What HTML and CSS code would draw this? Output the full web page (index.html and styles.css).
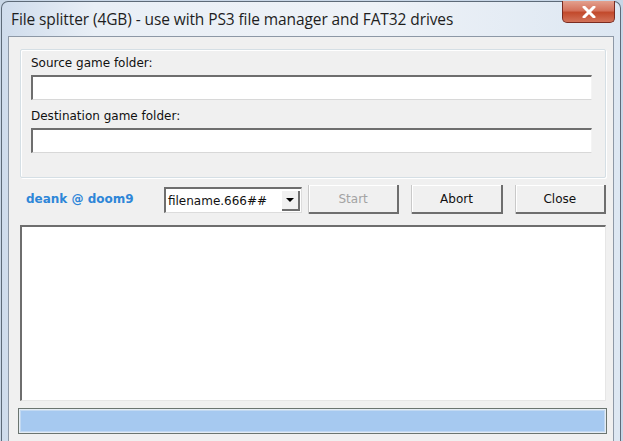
FILE: index.html
```html
<!DOCTYPE html>
<html lang="en">

<head>
    <meta charset="UTF-8">
    <title>File splitter (4GB)</title>
    <link rel="stylesheet" href="styles.css">
</head>

<body>
    <div class="window">
        <div class="titlebar">
            <span class="title">File splitter (4GB) - use with PS3 file manager and FAT32 drives</span>
            <button class="close-btn">
                <svg width="14" height="12" viewBox="0 0 14 12">
                    <path d="M2 1 L12 11 M12 1 L2 11" stroke="#fff" stroke-width="3" stroke-linecap="round" />
                </svg>
            </button>
        </div>

        <div class="client">
            <div class="group">
                <label class="field-label">Source game folder:</label>
                <div class="edit"></div>
                <label class="field-label">Destination game folder:</label>
                <div class="edit"></div>
            </div>

            <div class="toolbar">
                <span class="credit">deank @ doom9</span>
                <div class="combo">
                    <span class="combo-text">filename.666##</span>
                    <span class="combo-arrow">
                        <svg width="8" height="4" viewBox="0 0 8 4">
                            <path d="M0 0 H8 L4 4 Z" fill="#000" />
                        </svg>
                    </span>
                </div>
                <button class="btn disabled">Start</button>
                <button class="btn">Abort</button>
                <button class="btn">Close</button>
            </div>

            <div class="log"></div>

            <div class="progress">
                <div class="progress-fill"></div>
            </div>
        </div>
    </div>
</body>

</html>
```

FILE: styles.css
```css
* {
    box-sizing: border-box;
}

body {
    margin: 0;
    width: 623px;
    height: 441px;
    overflow: hidden;
    background: #c8d6e6;
    font-family: Tahoma, "DejaVu Sans", sans-serif;
}

.window {
    width: 620px;
    height: 441px;
    margin-left: 1px;
    margin-top: 1px;
    border: 1px solid #5d6a78;
    border-bottom: none;
    border-radius: 7px 7px 0 0;
    background: linear-gradient(90deg, #cfdcec 0%, #e9eff6 15%, #eef2f7 60%, #dde7f2 100%);
    display: flex;
    flex-direction: column;
}

.titlebar {
    height: 34px;
    display: flex;
    align-items: flex-start;
    justify-content: space-between;
    padding-left: 9px;
    flex-shrink: 0;
}

.title {
    margin-top: 6px;
    font-family: "Open Sans", "Noto Sans", sans-serif;
    font-size: 15.5px;
    color: #1e1e1e;
    letter-spacing: -0.1px;
}

.close-btn {
    width: 53px;
    height: 22px;
    margin-right: 5px;
    margin-top: -1px;
    border: 1px solid #7a2b20;
    border-top: none;
    border-radius: 0 0 5px 5px;
    background: linear-gradient(180deg, #e3a08e 0%, #d4725c 45%, #c24a2c 55%, #d27259 100%);
    display: flex;
    align-items: center;
    justify-content: center;
    padding: 0;
}

.client {
    flex: 1;
    margin-left: 6px;
    margin-right: 6px;
    border: 1px solid #8d98a6;
    border-bottom: none;
    background: #f0f0f0;
    padding: 12px 7px 0 11px;
    display: flex;
    flex-direction: column;
}

.group {
    height: 129px;
    border: 1px solid #d5dfe5;
    box-shadow: inset 1px 1px 0 #fff, 1px 1px 0 #fff;
    border-radius: 2px;
    padding: 5px 13px 0 10px;
    display: flex;
    flex-direction: column;
}

.field-label {
    font-size: 12px;
    color: #111;
    height: 20px;
    line-height: 16px;
}

.edit {
    height: 25px;
    background: #fff;
    border-top: 2px solid #6e6e6e;
    border-left: 2px solid #6e6e6e;
    border-right: 1px solid #f4f4f4;
    border-bottom: 1px solid #d8d8d8;
    margin-bottom: 8px;
}

.toolbar {
    height: 46px;
    display: flex;
    align-items: flex-start;
    padding-top: 7px;
}

.credit {
    width: 145px;
    padding-left: 6px;
    margin-top: 7px;
    font-size: 12px;
    font-weight: bold;
    color: #2e86d8;
}

.combo {
    width: 139px;
    height: 26px;
    margin-top: 2px;
    background: #fff;
    border-top: 2px solid #6e6e6e;
    border-left: 2px solid #6e6e6e;
    border-right: 1px solid #dcdcdc;
    border-bottom: 1px solid #dcdcdc;
    display: flex;
    align-items: center;
    justify-content: space-between;
    padding-left: 2px;
    padding-right: 1px;
}

.combo-text {
    font-size: 12px;
    color: #111;
}

.combo-arrow {
    width: 18px;
    height: 20px;
    background: #f0f0f0;
    border-right: 2px solid #6e6e6e;
    border-bottom: 2px solid #6e6e6e;
    display: flex;
    align-items: center;
    justify-content: center;
}

.btn {
    width: 91px;
    height: 29px;
    margin-left: 13px;
    background: #f0f0f0;
    border: none;
    border-right: 2px solid #6e6e6e;
    border-bottom: 2px solid #6e6e6e;
    box-shadow: inset 1px 1px 0 #fff, -1px 0 0 #c9c9c9;
    font-family: Tahoma, "DejaVu Sans", sans-serif;
    font-size: 12px;
    color: #111;
    padding: 0;
}

.btn.disabled {
    margin-left: 7px;
    color: #a3a3a3;
}

.log {
    height: 176px;
    margin-top: 1px;
    background: #fff;
    border-top: 2px solid #6e6e6e;
    border-left: 2px solid #6e6e6e;
    border-right: 1px solid #e6e6e6;
    border-bottom: 1px solid #e6e6e6;
}

.progress {
    height: 26px;
    margin-top: 7px;
    margin-left: -2px;
    margin-right: -1px;
    border: 1px solid #6b7570;
    background: #e4ecf4;
    padding: 1px;
}

.progress-fill {
    height: 100%;
    background: #a6c9f0;
    border: 1px solid #c2d9f2;
}
```
